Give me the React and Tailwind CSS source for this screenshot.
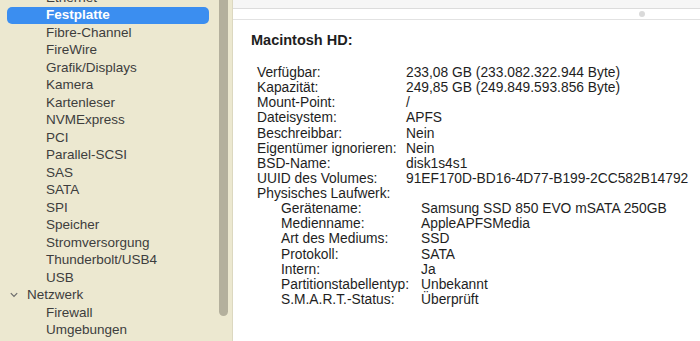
import React from "react";

const items = [
  "Ethernet",
  "Festplatte",
  "Fibre-Channel",
  "FireWire",
  "Grafik/Displays",
  "Kamera",
  "Kartenleser",
  "NVMExpress",
  "PCI",
  "Parallel-SCSI",
  "SAS",
  "SATA",
  "SPI",
  "Speicher",
  "Stromversorgung",
  "Thunderbolt/USB4",
  "USB",
];

const top = [
  ["Verfügbar:", "233,08 GB (233.082.322.944 Byte)"],
  ["Kapazität:", "249,85 GB (249.849.593.856 Byte)"],
  ["Mount-Point:", "/"],
  ["Dateisystem:", "APFS"],
  ["Beschreibbar:", "Nein"],
  ["Eigentümer ignorieren:", "Nein"],
  ["BSD-Name:", "disk1s4s1"],
  ["UUID des Volumes:", "91EF170D-BD16-4D77-B199-2CC582B14792"],
];

const sub = [
  ["Gerätename:", "Samsung SSD 850 EVO mSATA 250GB"],
  ["Medienname:", "AppleAPFSMedia"],
  ["Art des Mediums:", "SSD"],
  ["Protokoll:", "SATA"],
  ["Intern:", "Ja"],
  ["Partitionstabellentyp:", "Unbekannt"],
  ["S.M.A.R.T.-Status:", "Überprüft"],
];

export default function App() {
  return (
    <div
      className="flex h-[341px] w-[700px] overflow-hidden bg-white text-[13.5px]"
      style={{ fontFamily: '"Liberation Sans", Arial, sans-serif' }}
    >
      {/* Sidebar */}
      <div className="flex h-full w-[233px] shrink-0 border-r border-[#dcd8c0] bg-[#ece8d0]">
        <div className="mt-[-11px] flex w-[216px] flex-col text-[#3d3d3d]">
          {items.map((t) =>
            t === "Festplatte" ? (
              <div
                key={t}
                className="mx-[7px] flex h-[17.5px] items-center rounded-[5px] bg-[#3b8ef0] pl-[39px] font-bold text-white"
              >
                {t}
              </div>
            ) : (
              <div key={t} className="flex h-[17.5px] items-center pl-[46px]">
                {t}
              </div>
            )
          )}
          <div className="flex h-[17.5px] items-center pl-[10px]">
            <svg width="8" height="6" viewBox="0 0 8 6" className="mr-[9px]">
              <path d="M0.8 1.2 L4 4.4 L7.2 1.2" fill="none" stroke="#6b6b6b" strokeWidth="1.2" />
            </svg>
            Netzwerk
          </div>
          <div className="flex h-[17.5px] items-center pl-[46px]">Firewall</div>
          <div className="flex h-[17.5px] items-center pl-[46px]">Umgebungen</div>
        </div>
        <div className="flex w-[16px] justify-start pl-[3px]">
          <div className="mt-[-12px] h-[328px] w-[9px] rounded-full bg-[#b4b09d]" />
        </div>
      </div>

      {/* Content */}
      <div className="flex flex-1 flex-col">
        <div className="h-[9px] border-b border-[#dcdcdc] bg-[#f6f6f6]" />
        <div className="flex h-[11px] items-center border-b border-[#e2e2e2] pl-[406px]">
          <div className="h-[6px] w-[6px] rounded-full bg-[#dadada]" />
        </div>
        <div className="pl-[18px] pt-[12px] text-[#1e1e1e]">
          <div className="text-[14.5px] font-bold leading-[17px]">Macintosh HD:</div>
          <div className="mt-[16px] pl-[6px] text-[13.8px] leading-[15.13px]">
            {top.map(([k, v]) => (
              <div key={k} className="grid grid-cols-[149px_1fr] whitespace-nowrap">
                <span>{k}</span>
                <span>{v}</span>
              </div>
            ))}
            <div>Physisches Laufwerk:</div>
            <div className="pl-[24px]">
              {sub.map(([k, v]) => (
                <div key={k} className="grid grid-cols-[140px_1fr] whitespace-nowrap">
                  <span>{k}</span>
                  <span>{v}</span>
                </div>
              ))}
            </div>
          </div>
        </div>
      </div>
    </div>
  );
}
